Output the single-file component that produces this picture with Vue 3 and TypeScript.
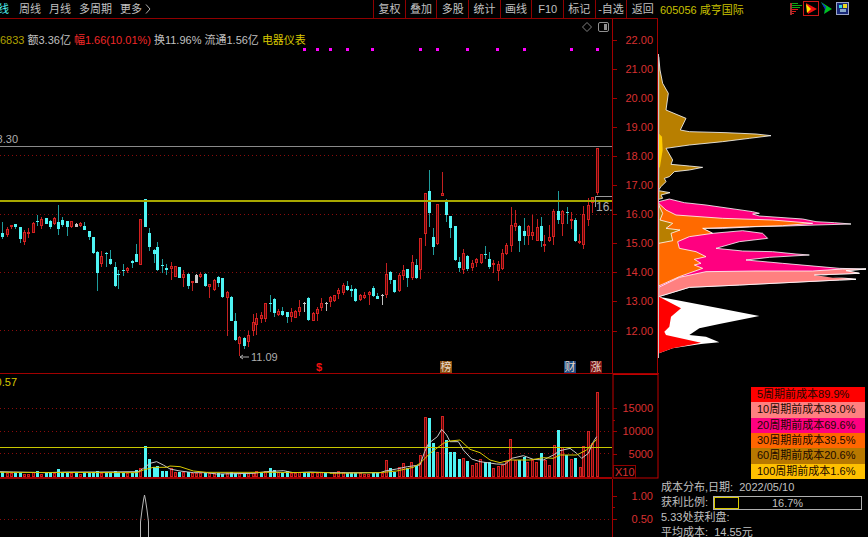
<template>
  <div class="screen">
    <div class="charts">
      <div class="toolbar">
        <div class="periods">
          <span class="period active">线</span>
          <span v-for="p in periods" :key="p" class="period">{{ p }}</span>
          <span class="period more">
            更多
            <svg width="6" height="10" viewBox="0 0 6 10"><path d="M1 .5L5 5L1 9.5" fill="none" stroke="#b0b0b0" /></svg>
          </span>
        </div>
        <div class="tools">
          <span v-for="t in tools" :key="t" class="tool">{{ t }}</span>
        </div>
      </div>

      <div class="panel main-panel">
        <svg width="659" height="355" viewBox="0 19 659 355">
          <line v-for="y in [155.5, 214.5, 272.5, 330.5]" :key="y" :x1="0" :x2="612" :y1="y" :y2="y" class="dots" />
          <line x1="0" x2="612" y1="146.5" y2="146.5" stroke="#8a8a8a" />
          <text x="18" y="143" text-anchor="end" class="gray">18.30</text>
          <rect v-for="x in marks" :key="x" :x="x" y="48" width="3" height="3" fill="#ff00ff" />

          <g shape-rendering="crispEdges">
            <g v-for="c in candles" :key="c.x">
              <line :x1="c.x + 0.5" :x2="c.x + 0.5" :y1="c.hi" :y2="c.lo" :stroke="c.wick" />
              <rect :x="c.bx" :y="c.by" :width="c.bw" :height="c.bh" :fill="c.fill" :stroke="c.edge" />
            </g>
          </g>

          <rect x="0" y="200" width="612" height="2" fill="#a8a800" />
          <path d="M595.5 207V196.5H612" fill="none" stroke="#9a9a9a" />
          <svg x="595" y="198" width="17" height="16" viewBox="0 0 17 16"><text x="1" y="13" class="gray big">16.90</text></svg>
          <path d="M240 357H249M240 357l3-2M240 357l3 2" fill="none" stroke="#aeaeae" />
          <text x="251" y="361" class="gray">11.09</text>

          <path d="M587 22.5l4.5 4.5-4.5 4.5-4.5-4.5z" fill="none" stroke="#808080" />
          <rect x="598.5" y="22.5" width="10" height="9" rx="1.5" fill="none" stroke="#909090" />
          <rect x="604" y="24" width="3" height="6" fill="#909090" />

          <text x="316" y="371" class="tag-plain">$</text>
          <g v-for="t in tags" :key="t.label">
            <rect :x="t.x" y="361" width="12" height="12" :fill="t.bg" />
            <text :x="t.x + 0.5" y="371" class="tag">{{ t.label }}</text>
          </g>

          <line x1="612.5" x2="612.5" y1="19" y2="374" class="axis" />
          <line x1="657.5" x2="657.5" y1="19" y2="374" class="axis" />
          <rect x="658" y="54" width="1" height="304" fill="#c8c8c8" />
          <g v-for="a in priceAxis" :key="a.label">
            <line x1="613" x2="617" :y1="a.y + 0.5" :y2="a.y + 0.5" class="axis" />
            <text x="653" :y="a.y + 4" text-anchor="end" class="axis-text">{{ a.label }}</text>
          </g>
          <line x1="0" x2="659" y1="373.5" y2="373.5" class="axis" />
        </svg>
        <div class="quote">
          <span class="olive">6833</span>
          <span>额3.36亿</span>
          <span class="red">幅1.66(10.01%)</span>
          <span>换11.96%</span>
          <span>流通1.56亿</span>
          <span class="yellow">电器仪表</span>
        </div>
      </div>

      <div class="panel">
        <svg width="659" height="105" viewBox="0 374 659 105">
          <line v-for="y in [408.5, 431.5, 453.5]" :key="y" x1="0" x2="612" :y1="y" :y2="y" class="dots" />
          <text x="17" y="386" text-anchor="end" class="yellow-text">10.57</text>
          <rect v-for="b in bars" :key="b.x" shape-rendering="crispEdges"
            :x="b.bx" :y="b.by" :width="b.bw" :height="b.bh" :fill="b.fill" :stroke="b.edge" />
          <line x1="0" x2="612" y1="447.5" y2="447.5" stroke="#c8c800" />
          <polyline :points="volWhite" fill="none" stroke="#c8c8c8" />
          <polyline :points="volYellow" fill="none" stroke="#d8c800" />
          <line x1="0" x2="612" y1="478" y2="478" stroke="#a00000" stroke-width="2" />
          <rect x="613" y="374.5" width="45" height="103.5" fill="#000" stroke="#c00000" />
          <line x1="613" x2="615" y1="420.5" y2="420.5" class="axis" />
          <g v-for="a in volAxis" :key="a.label">
            <line x1="613" x2="617" :y1="a.y + 0.5" :y2="a.y + 0.5" class="axis" />
            <text x="653" :y="a.y + 4" text-anchor="end" class="axis-text">{{ a.label }}</text>
          </g>
          <rect x="613.5" y="465.5" width="22" height="12.5" fill="none" stroke="#900000" />
          <text x="615" y="476" class="axis-text">X10</text>
        </svg>
      </div>

      <div class="panel">
        <svg width="659" height="58" viewBox="0 479 659 58">
          <line x1="0" x2="612" y1="519.5" y2="519.5" class="dots" />
          <path d="M140.5 537V522L142 510L143.5 500L144.5 495L145.5 500L147 510L148.5 522V537" fill="none" stroke="#b8b8b8" />
          <line x1="612.5" x2="612.5" y1="479" y2="537" class="axis" />
          <line x1="613" x2="615" y1="507.5" y2="507.5" class="axis" />
          <g v-for="a in ratioAxis" :key="a.label">
            <line x1="613" x2="617" :y1="a.y + 0.5" :y2="a.y + 0.5" class="axis" />
            <text x="653" :y="a.y + 4" text-anchor="end" class="axis-text">{{ a.label }}</text>
          </g>
        </svg>
      </div>
    </div>

    <div class="side">
      <div class="side-head">
        <span class="stock">605056 咸亨国际</span>
        <svg class="side-icons" width="62" height="18" viewBox="790 0 62 18">
          <g shape-rendering="crispEdges">
            <rect x="790" y="3" width="2" height="12" fill="#a03030" />
            <rect x="792" y="3" width="6" height="1" fill="#10a810" />
            <rect x="792" y="5" width="10" height="1" fill="#10a810" />
            <rect x="792" y="7" width="8" height="1" fill="#10a810" />
            <rect x="792" y="9" width="6" height="1" fill="#e01818" />
            <rect x="792" y="11" width="4" height="1" fill="#e01818" />
            <rect x="792" y="13" width="2" height="1" fill="#e01818" />
          </g>
          <rect x="803.5" y="1.5" width="15" height="14" fill="none" stroke="#c81818" />
          <path d="M806 3L817 9L808 14Z" fill="#f01010" />
          <path d="M806 4L811 9L807 13Z" fill="#ffe800" />
          <path d="M821 2L832 9L824 14L825 9Z" fill="#00c020" />
          <path d="M821 2L826 7L824 14L825 9Z" fill="#1018e0" />
          <rect x="836.5" y="2.5" width="12" height="12" fill="#182878" stroke="#9aa4c8" />
          <rect x="839" y="5" width="3" height="3" fill="#30d8e0" />
          <rect x="843" y="4" width="4" height="4" fill="#e8d820" />
          <rect x="840" y="9" width="6" height="3" fill="#88a8c8" />
        </svg>
      </div>
      <svg class="profile" width="209" height="369" viewBox="659 18 209 369">
        <polygon :points="shapes.gold" fill="#b87f00" class="edge" />
        <polygon :points="shapes.goldTip" fill="#b87f00" class="edge" />
        <polygon :points="shapes.yellowSliver" fill="#ffcc00" />
        <polygon :points="shapes.envelope" fill="#ff0080" class="edge" />
        <polygon :points="shapes.salmon" fill="#ff8080" class="edge" />
        <polygon :points="shapes.orange" fill="#ff6a00" class="edge" />
        <polygon :points="shapes.goldLow" fill="#b87f00" class="edge" />
        <polygon :points="shapes.white" fill="#ffffff" />
        <polygon :points="shapes.red" fill="#ff0000" />
        <polygon :points="shapes.gap" fill="#000000" />
      </svg>
      <div class="legend">
        <div v-for="l in legend" :key="l.label" class="legend-row" :style="{ background: l.color }">{{ l.label }}</div>
      </div>
      <div class="cost">
        <div class="cost-row">成本分布,日期:&nbsp; 2022/05/10</div>
        <div class="cost-row profit">
          <span>获利比例:</span>
          <div class="meter">
            <div class="meter-fill" :style="{ width: profitRatio + '%' }"></div>
            <span class="meter-text">{{ profitRatio }}%</span>
          </div>
        </div>
        <div class="cost-row">5.33处获利盘:</div>
        <div class="cost-row">平均成本:&nbsp; 14.55元</div>
      </div>
    </div>
  </div>
</template>

<script setup lang="ts">
type Kind = 'c' | 'r' | 'w';
type Raw = [number, number, number, number, number, Kind];

const periods = ['周线', '月线', '多周期'];
const tools = ['复权', '叠加', '多股', '统计', '画线', 'F10', '标记', '-自选', '返回'];
const marks = [303, 316, 329, 346, 371, 419, 436, 466, 496, 523, 570, 596];
const profitRatio = 16.7;

const tags = [
  { label: '榜', x: 440, bg: '#8a5010' },
  { label: '财', x: 564, bg: '#1c4a80' },
  { label: '涨', x: 590, bg: '#7a1414' },
];

const priceAxis = [22, 21, 20, 19, 18, 17, 16, 15, 14, 13, 12].map((v) => ({
  label: v.toFixed(2),
  y: Math.round(39.5 + (22 - v) * 29.1),
}));
const volAxis = [
  { label: '15000', y: 408 },
  { label: '10000', y: 431 },
  { label: '5000', y: 454 },
];
const ratioAxis = [
  { label: '1.00', y: 496 },
  { label: '0.50', y: 519 },
];

const legend = [
  { label: '5周期前成本89.9%', color: '#ff0000' },
  { label: '10周期前成本83.0%', color: '#ff8080' },
  { label: '20周期前成本69.6%', color: '#ff0080' },
  { label: '30周期前成本39.5%', color: '#ff6600' },
  { label: '60周期前成本20.6%', color: '#b87800' },
  { label: '100周期前成本1.6%', color: '#ffc000' },
];

// candles read off the picture at 3x: x, high, low, body top, body bottom
const leftRaw: Raw[] = [
  [-5, 330, 352, 338, 352, 'r'], [7, 277, 327, 308, 322, 'c'], [20, 290, 322, 296, 314, 'r'], [33, 285, 297, 285, 292, 'r'],
  [46, 281, 298, 283, 292, 'c'], [59, 290, 338, 292, 327, 'c'], [72, 300, 346, 305, 335, 'r'], [85, 295, 325, 306, 312, 'r'],
  [98, 275, 310, 279, 308, 'r'], [112, 255, 288, 272, 276, 'c'], [124, 262, 297, 268, 288, 'r'], [137, 263, 283, 265, 281, 'c'],
  [150, 270, 297, 272, 291, 'c'], [163, 262, 285, 265, 282, 'r'], [174, 225, 314, 276, 298, 'c'], [187, 262, 290, 270, 286, 'c'],
  [201, 272, 317, 274, 292, 'c'], [214, 272, 294, 274, 292, 'r'], [228, 278, 292, 282, 290, 'w'], [240, 275, 291, 278, 288, 'r'],
  [253, 277, 301, 287, 299, 'c'], [266, 302, 330, 304, 320, 'c'], [280, 320, 372, 322, 368, 'c'], [291, 364, 482, 366, 428, 'c'],
  [304, 362, 412, 378, 402, 'r'], [318, 367, 410, 369, 371, 'c'], [331, 360, 405, 387, 403, 'c'], [345, 395, 470, 411, 468, 'c'],
  [355, 420, 478, 432, 436, 'c'], [369, 403, 438, 420, 424, 'c'], [382, 410, 428, 414, 424, 'r'], [396, 390, 415, 393, 400, 'c'],
  [407, 343, 397, 372, 395, 'c'], [421, 267, 405, 267, 405, 'r'], [434, 207, 292, 207, 292, 'c'], [447, 293, 362, 310, 352, 'c'],
  [461, 358, 398, 361, 371, 'c'], [472, 337, 424, 352, 421, 'c'], [485, 388, 428, 405, 407, 'c'], [499, 403, 435, 415, 420, 'c'],
  [512, 395, 449, 408, 416, 'r'], [526, 408, 442, 408, 440, 'r'], [537, 411, 445, 412, 444, 'c'], [550, 420, 470, 432, 445, 'r'],
  [563, 428, 478, 431, 468, 'c'], [577, 452, 484, 454, 456, 'r'], [587, 432, 460, 434, 458, 'w'], [601, 425, 445, 432, 442, 'r'],
  [615, 430, 472, 431, 468, 'c'], [628, 462, 505, 463, 470, 'r'], [642, 447, 482, 451, 480, 'r'], [654, 438, 470, 440, 458, 'c'],
  [667, 444, 503, 445, 502, 'c'], [680, 484, 618, 485, 505, 'r'], [694, 499, 574, 501, 572, 'c'], [705, 550, 632, 574, 631, 'c'],
  [718, 618, 678, 620, 643, 'r'], [731, 622, 658, 623, 648, 'c'], [745, 604, 650, 615, 635, 'r'], [758, 553, 618, 577, 604, 'r'],
  [769, 550, 615, 565, 584, 'r'], [783, 545, 580, 555, 568, 'r'], [796, 519, 575, 520, 568, 'r'], [809, 495, 545, 518, 522, 'c'],
  [821, 505, 560, 507, 550, 'c'], [834, 537, 557, 543, 555, 'r'], [847, 530, 558, 543, 555, 'c'], [860, 545, 578, 546, 562, 'c'],
  [874, 535, 575, 546, 562, 'r'], [886, 540, 565, 543, 563, 'r'], [898, 510, 558, 530, 545, 'r'],
];
const rightRaw: Raw[] = [
  [11, 515, 545, 518, 520, 'w'], [25, 502, 572, 503, 570, 'c'], [38, 545, 572, 548, 572, 'r'], [50, 532, 572, 536, 552, 'r'],
  [64, 503, 542, 519, 533, 'r'], [78, 515, 543, 518, 520, 'w'], [91, 497, 532, 502, 516, 'r'], [102, 495, 515, 496, 512, 'r'],
  [115, 475, 508, 479, 492, 'r'], [128, 460, 494, 464, 490, 'r'], [142, 452, 484, 468, 481, 'c'], [153, 466, 500, 478, 484, 'c'],
  [166, 474, 516, 478, 513, 'c'], [180, 493, 513, 495, 511, 'r'], [193, 486, 507, 495, 503, 'r'], [206, 482, 525, 485, 496, 'r'],
  [218, 468, 500, 473, 498, 'c'], [232, 490, 508, 497, 507, 'c'], [245, 492, 524, 495, 497, 'w'], [258, 398, 503, 432, 496, 'r'],
  [269, 423, 462, 427, 450, 'c'], [283, 449, 490, 451, 487, 'c'], [296, 430, 487, 435, 483, 'r'], [310, 406, 450, 420, 438, 'r'],
  [322, 417, 470, 418, 445, 'c'], [335, 376, 450, 395, 445, 'r'], [348, 387, 446, 405, 444, 'c'], [361, 325, 446, 325, 420, 'r'],
  [374, 190, 348, 190, 313, 'r'], [386, 120, 290, 182, 248, 'c'], [399, 293, 376, 322, 352, 'c'], [412, 223, 345, 223, 342, 'r'],
  [426, 125, 197, 190, 197, 'r'], [439, 208, 276, 212, 254, 'c'], [450, 257, 325, 257, 295, 'c'], [464, 287, 394, 287, 390, 'c'],
  [477, 382, 425, 395, 414, 'c'], [490, 358, 432, 369, 420, 'r'], [502, 374, 424, 378, 418, 'c'], [515, 390, 424, 398, 414, 'r'],
  [528, 384, 410, 386, 400, 'r'], [542, 372, 403, 372, 399, 'r'], [555, 349, 387, 372, 374, 'c'], [566, 365, 417, 387, 410, 'c'],
  [580, 390, 430, 400, 401, 'r'], [593, 392, 452, 403, 422, 'r'], [606, 358, 420, 370, 418, 'r'], [618, 338, 375, 344, 372, 'r'],
  [632, 232, 365, 286, 347, 'r'], [644, 241, 302, 280, 292, 'r'], [658, 285, 365, 287, 333, 'c'], [671, 265, 345, 303, 318, 'c'],
  [683, 285, 345, 287, 317, 'r'], [696, 254, 330, 305, 318, 'r'], [710, 268, 333, 290, 332, 'r'], [723, 262, 352, 288, 332, 'c'],
  [733, 316, 365, 342, 348, 'r'], [747, 286, 335, 320, 333, 'r'], [760, 237, 346, 244, 321, 'r'], [774, 182, 282, 244, 270, 'c'],
  [787, 240, 317, 244, 282, 'r'], [800, 231, 282, 245, 247, 'c'], [812, 245, 297, 268, 270, 'r'], [826, 264, 335, 270, 332, 'c'],
  [838, 313, 343, 334, 340, 'r'], [850, 228, 357, 252, 345, 'r'], [863, 205, 288, 224, 270, 'r'], [877, 200, 250, 202, 218, 'r'],
  [890, 55, 195, 55, 190, 'r'],
];

const palette: Record<Kind, { wick: string; fill: string; edge: string }> = {
  c: { wick: '#1e9c9c', fill: '#4ff4f4', edge: 'none' },
  r: { wick: '#c42020', fill: '#5a0808', edge: '#d42020' },
  w: { wick: '#c0c0c0', fill: '#c8c8c8', edge: 'none' },
};

// red bodies are outlined, so the rect sits half a pixel in to stay 3px wide overall
function body(x: number, top: number, h: number, kind: Kind) {
  if (palette[kind].edge === 'none') return { bx: x - 1, by: top, bw: 3, bh: h };
  return { bx: x - 0.5, by: top + 0.5, bw: 2, bh: Math.max(h - 1, 1) };
}

function candle(r: Raw, offset: number) {
  const [rx, hi, lo, top, bot, kind] = r;
  const py = (v: number) => Math.round(v / 3 + 130);
  const x = Math.round((rx + offset) / 3);
  const t = py(top);
  return {
    x,
    hi: py(hi),
    lo: py(lo),
    ...body(x, t, Math.max(py(bot) - t, 1), kind),
    ...palette[kind],
  };
}

const candles = [...leftRaw.map((r) => candle(r, 0)), ...rightRaw.map((r) => candle(r, 900))];

const volLeft: [number, number, Kind][] = [
  [7, 336, 'c'], [20, 340, 'r'], [33, 338, 'r'], [46, 338, 'c'], [59, 338, 'c'], [72, 342, 'r'], [85, 342, 'r'], [98, 335, 'r'],
  [112, 332, 'c'], [124, 342, 'r'], [137, 338, 'c'], [150, 336, 'c'], [163, 340, 'r'], [174, 326, 'c'], [187, 336, 'c'], [201, 340, 'c'],
  [214, 340, 'r'], [228, 338, 'c'], [240, 342, 'r'], [253, 340, 'c'], [266, 340, 'c'], [280, 335, 'c'], [291, 332, 'c'], [304, 338, 'r'],
  [318, 336, 'c'], [331, 340, 'c'], [345, 334, 'c'], [355, 338, 'c'], [369, 338, 'c'], [382, 338, 'r'], [396, 338, 'c'], [407, 330, 'c'],
  [421, 325, 'r'], [434, 258, 'c'], [447, 297, 'c'], [461, 322, 'c'], [472, 318, 'c'], [485, 333, 'c'], [499, 333, 'c'], [512, 325, 'r'],
  [526, 336, 'r'], [537, 336, 'c'], [550, 335, 'r'], [563, 335, 'c'], [577, 340, 'r'], [587, 338, 'r'], [601, 340, 'r'], [615, 338, 'c'],
  [628, 340, 'r'], [642, 338, 'r'], [654, 340, 'c'], [667, 341, 'c'], [680, 340, 'r'], [694, 337, 'c'], [705, 340, 'c'], [718, 338, 'r'],
  [731, 340, 'c'], [745, 338, 'r'], [758, 338, 'r'], [769, 334, 'r'], [783, 338, 'c'], [796, 332, 'r'], [809, 323, 'c'], [821, 330, 'c'],
  [834, 335, 'r'], [847, 338, 'c'], [860, 334, 'c'], [874, 338, 'r'], [886, 338, 'r'], [898, 336, 'r'], [911, 338, 'c'], [925, 336, 'c'],
  [937, 340, 'r'], [950, 338, 'r'], [963, 336, 'r'], [976, 338, 'c'], [989, 334, 'r'],
];
const volRight: [number, number, Kind][] = [
  [12, 335, 'r'], [25, 333, 'r'], [38, 335, 'r'], [50, 338, 'c'], [63, 338, 'c'], [76, 338, 'c'], [89, 340, 'r'], [102, 342, 'r'],
  [115, 342, 'r'], [128, 340, 'c'], [141, 340, 'c'], [155, 340, 'r'], [168, 300, 'r'], [180, 324, 'c'], [193, 335, 'c'], [206, 320, 'r'],
  [220, 310, 'r'], [232, 325, 'c'], [244, 307, 'r'], [258, 318, 'c'], [270, 285, 'r'], [284, 172, 'r'], [296, 175, 'c'], [309, 250, 'c'],
  [322, 275, 'r'], [335, 167, 'r'], [349, 240, 'c'], [361, 277, 'c'], [373, 275, 'c'], [387, 298, 'c'], [400, 295, 'r'], [412, 304, 'c'],
  [425, 315, 'r'], [438, 310, 'r'], [451, 297, 'r'], [464, 307, 'c'], [477, 307, 'c'], [490, 323, 'r'], [503, 318, 'r'], [515, 315, 'r'],
  [528, 302, 'r'], [541, 237, 'r'], [554, 300, 'r'], [568, 300, 'c'], [581, 292, 'c'], [592, 305, 'r'], [605, 300, 'r'], [618, 307, 'r'],
  [632, 280, 'c'], [645, 300, 'r'], [658, 315, 'r'], [671, 256, 'r'], [685, 210, 'c'], [697, 260, 'r'], [709, 285, 'c'], [722, 297, 'r'],
  [736, 293, 'c'], [749, 320, 'r'], [760, 258, 'r'], [773, 213, 'r'], [787, 250, 'r'], [800, 95, 'r'],
];

function bar(rx: number, rtop: number, kind: Kind, origin: number) {
  const x = Math.round(origin + rx / 3);
  const top = Math.round(rtop / 3 + 360);
  return { x, ...body(x, top, 477 - top, kind), fill: palette[kind].fill, edge: palette[kind].edge };
}

const bars = [
  ...volLeft.filter((b) => b[0] < 986).map((b) => bar(b[0], b[1], b[2], 0)),
  ...volRight.map((b) => bar(b[0], b[1], b[2], 330)),
];

function volLine(left: number[][], right: number[][]): string {
  const l = left.map(([x, y]) => `${x / 3},${y / 3 + 360}`);
  const r = right.map(([x, y]) => `${330 + x / 3},${y / 3 + 360}`);
  return [...l, ...r].join(' ');
}

const volWhite = volLine(
  [[0, 335], [40, 336], [140, 338], [200, 336], [300, 336], [415, 335], [430, 325], [450, 310], [470, 305], [490, 315], [510, 327], [540, 333], [580, 338], [620, 338], [650, 342], [760, 340], [800, 335], [850, 332], [880, 338], [930, 336], [990, 338]],
  [[0, 338], [150, 338], [165, 333], [200, 327], [232, 320], [270, 315], [284, 275], [296, 250], [322, 230], [335, 208], [350, 225], [360, 245], [385, 245], [400, 270], [425, 297], [450, 305], [500, 312], [525, 313], [545, 295], [580, 287], [610, 298], [640, 300], [670, 285], [690, 272], [720, 265], [740, 280], [755, 295], [775, 280], [790, 245], [800, 230]],
);
const volYellow = volLine(
  [[0, 337], [410, 338], [430, 330], [460, 322], [500, 322], [510, 318], [540, 320], [580, 333], [620, 337], [800, 337], [990, 338]],
  [[0, 340], [150, 338], [200, 333], [250, 322], [270, 310], [300, 280], [340, 250], [360, 243], [390, 240], [420, 268], [450, 278], [480, 300], [510, 308], [540, 300], [600, 300], [640, 293], [670, 295], [690, 285], [740, 285], [770, 270], [800, 238]],
);

// chip profile outlines, 3x coordinates measured from y=200 on the right edge
function shape(pts: number[][]): string {
  return pts.map(([x, y]) => `${656 + x / 3},${200 + y / 3}`).join(' ');
}

const shapes = {
  gold: shape([[8, -430], [12, -390], [20, -350], [37, -320], [30, -270], [90, -245], [73, -210], [100, -205], [210, -202], [300, -198], [345, -193], [280, -185], [200, -175], [100, -165], [30, -155], [50, -120], [45, -107], [100, -102], [140, -98], [100, -90], [55, -85], [40, -70], [25, -65], [30, -55], [15, -40], [8, -30]]),
  goldTip: shape([[8, -28], [42, -22], [15, -15], [20, -5], [8, -2]]),
  yellowSliver: shape([[8, -200], [18, -190], [20, -150], [12, -100], [8, -95]]),
  envelope: shape([[8, 5], [40, -3], [85, 8], [150, 15], [290, 35], [310, 40], [290, 42], [310, 48], [440, 57], [480, 65], [535, 68], [585, 72], [480, 75], [390, 78], [300, 80], [200, 85], [140, 85], [170, 100], [260, 92], [320, 100], [335, 115], [250, 125], [180, 145], [260, 153], [350, 155], [420, 162], [460, 165], [340, 172], [270, 180], [380, 190], [550, 205], [630, 207], [570, 212], [610, 220], [475, 225], [600, 238], [550, 240], [450, 245], [250, 255], [100, 262], [8, 290]]),
  salmon: shape([[8, 262], [70, 232], [150, 215], [300, 213], [470, 213], [560, 207], [630, 207], [570, 212], [610, 220], [475, 225], [600, 238], [550, 240], [450, 245], [250, 255], [100, 262], [8, 290]]),
  orange: shape([[8, 10], [30, 30], [60, 45], [200, 55], [350, 60], [470, 70], [380, 77], [280, 80], [140, 85], [170, 100], [100, 110], [65, 125], [70, 145], [120, 155], [150, 170], [115, 178], [135, 190], [115, 195], [140, 205], [70, 230], [8, 258]]),
  goldLow: shape([[8, 15], [20, 40], [12, 60], [50, 70], [30, 85], [72, 90], [45, 100], [50, 122], [8, 130]]),
  white: shape([[8, 290], [190, 325], [310, 348], [190, 372], [130, 385], [100, 405], [150, 410], [190, 427], [135, 432], [50, 445], [8, 460]]),
  red: shape([[8, 290], [75, 325], [45, 350], [40, 380], [25, 395], [30, 405], [135, 428], [50, 445], [8, 460]]),
  gap: shape([[475, 225], [600, 232], [530, 233]]),
};
</script>

<style scoped>
.screen { display: flex; width: 868px; height: 537px; overflow: hidden; background: #000; color: #c0c0c0; font: 11px "Liberation Sans", "Noto Sans CJK SC", sans-serif; }
.charts { width: 659px; flex-shrink: 0; display: flex; flex-direction: column; }
.toolbar { display: flex; justify-content: space-between; height: 18px; flex-shrink: 0; border-bottom: 1px solid #900000; width: 658px; }
.periods { display: flex; gap: 8px; align-items: center; margin-left: -2px; }
.period { line-height: 18px; font-size: 11px; white-space: nowrap; }
.period.active { color: #4ff4f4; margin-right: 2px; }
.more { display: flex; align-items: center; gap: 3px; }
.tools { display: flex; }
.tool { width: 31.67px; box-sizing: border-box; border-left: 1px solid #900000; text-align: center; line-height: 18px; white-space: nowrap; }
.panel { position: relative; flex-shrink: 0; }
.panel svg { display: block; }
.main-panel { height: 355px; }
.quote { position: absolute; left: 0; top: 14px; display: flex; gap: 3px; white-space: nowrap; line-height: 14px; }
.quote .olive { color: #b0a000; }
.quote .red { color: #f02828; }
.quote .yellow { color: #d8c800; }
text { font: 11px "Liberation Sans", "Noto Sans CJK SC", sans-serif; }
.gray { fill: #aeaeae; }
.big { font-size: 12px; }
.yellow-text { fill: #d8c800; }
.dots { stroke: #8a0c0c; stroke-dasharray: 1 3; }
.axis { stroke: #a00000; }
.axis-text { fill: #d83030; }
.tag { fill: #e8d8c8; font-size: 11px; }
.tag-plain { fill: #f01010; font-size: 11px; font-weight: bold; }
.side { flex: 1; display: flex; flex-direction: column; min-width: 0; }
.side-head { display: flex; height: 18px; flex-shrink: 0; align-items: center; }
.stock { color: #c8c000; font-size: 11px; margin-left: 1px; white-space: nowrap; }
.side-icons { margin-left: auto; margin-right: 16px; }
.profile { display: block; flex-shrink: 0; }
.edge { stroke: #ffffff; stroke-width: 0.8; stroke-linejoin: round; }
.legend { margin-left: 92px; width: 114px; height: 92px; flex-shrink: 0; display: flex; flex-direction: column; }
.legend-row { flex: 1; color: #1a0800; line-height: 15.3px; padding-left: 6px; white-space: nowrap; font-size: 11px; }
.cost { display: flex; flex-direction: column; flex-shrink: 0; margin-top: 1px; padding-left: 2px; }
.cost-row { height: 15px; flex-shrink: 0; line-height: 15px; white-space: nowrap; }
.profit { display: flex; align-items: center; }
.meter { position: relative; margin-left: 5px; width: 149px; height: 14px; box-sizing: border-box; border: 1px solid #b0b0b0; text-align: center; line-height: 12px; }
.meter-fill { position: absolute; left: 0; top: 0; bottom: 0; box-sizing: border-box; border: 1px solid #d8c800; }
.meter-text { position: relative; }
</style>

<style>
html, body { margin: 0; background: #000; overflow: hidden; }
</style>
